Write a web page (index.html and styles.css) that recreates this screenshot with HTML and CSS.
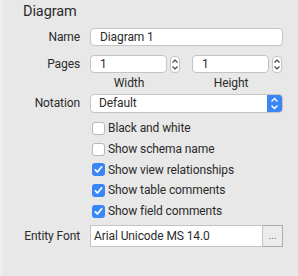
FILE: index.html
```html
<!DOCTYPE html>
<html lang="en">
<head>
  <meta charset="UTF-8" />
  <title>Diagram Inspector</title>
  <link rel="stylesheet" href="styles.css">
</head>
<body>
  <div class="panel">
    <h1>Diagram</h1>

    <div class="row row-name">
      <label class="label">Name</label>
      <div class="field"><input class="text-input" type="text" value="Diagram 1"></div>
    </div>

    <div class="row row-pages">
      <label class="label">Pages</label>
      <div class="field pages">
        <div class="page-box">
          <div class="page-inputs">
            <input class="text-input short" type="text" value="1">
            <span class="stepper">
              <svg width="10" height="17" viewBox="0 0 10 17"><path d="M2.5 6.5 5 4 7.5 6.5M2.5 10.5 5 13 7.5 10.5" fill="none" stroke="#444" stroke-width="1.2"/></svg>
            </span>
          </div>
          <span class="caption">Width</span>
        </div>
        <div class="page-box">
          <div class="page-inputs">
            <input class="text-input short" type="text" value="1">
            <span class="stepper">
              <svg width="10" height="17" viewBox="0 0 10 17"><path d="M2.5 6.5 5 4 7.5 6.5M2.5 10.5 5 13 7.5 10.5" fill="none" stroke="#444" stroke-width="1.2"/></svg>
            </span>
          </div>
          <span class="caption">Height</span>
        </div>
      </div>
    </div>

    <div class="row row-notation">
      <label class="label">Notation</label>
      <div class="field">
        <div class="select">
          <span class="select-value">Default</span>
          <span class="select-button">
            <svg width="15" height="17" viewBox="0 0 15 17"><path d="M4.5 6.5 7.5 3.5 10.5 6.5M4.5 10.5 7.5 13.5 10.5 10.5" fill="none" stroke="#fff" stroke-width="1.4"/></svg>
          </span>
        </div>
      </div>
    </div>

    <div class="checks">
      <div class="check"><span class="box"></span>Black and white</div>
      <div class="check"><span class="box"></span>Show schema name</div>
      <div class="check"><span class="box on"><svg width="13" height="13" viewBox="0 0 13 13"><path d="M3.3 6.8 5.4 9 9.7 3.8" fill="none" stroke="#fff" stroke-width="1.7" stroke-linecap="round" stroke-linejoin="round"/></svg></span>Show view relationships</div>
      <div class="check"><span class="box on"><svg width="13" height="13" viewBox="0 0 13 13"><path d="M3.3 6.8 5.4 9 9.7 3.8" fill="none" stroke="#fff" stroke-width="1.7" stroke-linecap="round" stroke-linejoin="round"/></svg></span>Show table comments</div>
      <div class="check"><span class="box on"><svg width="13" height="13" viewBox="0 0 13 13"><path d="M3.3 6.8 5.4 9 9.7 3.8" fill="none" stroke="#fff" stroke-width="1.7" stroke-linecap="round" stroke-linejoin="round"/></svg></span>Show field comments</div>
    </div>

    <div class="row row-font">
      <label class="label">Entity Font</label>
      <div class="field font-field">
        <input class="font-input" type="text" value="Arial Unicode MS 14.0">
        <button class="dots">...</button>
      </div>
    </div>
  </div>
</body>
</html>
```

FILE: styles.css
```css
body {
  margin: 0;
  background: #e8e8e8;
  font-family: Roboto, "Liberation Sans", sans-serif;
  font-size: 12px;
  letter-spacing: -0.1px;
  color: #2b2b2b;
}
.panel {
  padding: 2px 15px 0 0;
  border-left: 2px solid #efefef;
  height: 274px;
}
h1 {
  margin: 0 0 0 21px;
  font-size: 14.5px;
  font-weight: 400;
  line-height: 20px;
}
.row {
  display: grid;
  grid-template-columns: 78px minmax(0, 1fr);
  column-gap: 10px;
  align-items: start;
}
.label {
  text-align: right;
  line-height: 18px;
}
.row-name {
  margin-top: 6px;
}
.row-pages {
  margin-top: 9px;
}
.row-notation {
  margin-top: 4px;
}
.text-input {
  box-sizing: border-box;
  width: 100%;
  height: 18px;
  border: 1px solid #c4c4c4;
  border-radius: 4px;
  background: #fff;
  font: inherit;
  letter-spacing: inherit;
  color: inherit;
  padding: 0 9px;
  outline: none;
}
.pages {
  display: flex;
  gap: 12px;
}
.page-box {
  display: flex;
  flex-direction: column;
  align-items: center;
  width: 90px;
}
.page-inputs {
  display: flex;
  align-items: center;
  gap: 3px;
  width: 100%;
}
.text-input.short {
  width: 77px;
  flex: none;
}
.stepper {
  display: flex;
  width: 10px;
  height: 17px;
  box-sizing: border-box;
  border: 1px solid #c4c4c4;
  border-radius: 4px;
  background: #fff;
  align-items: center;
  justify-content: center;
}
.stepper svg {
  flex: none;
}
.caption {
  line-height: 14px;
  margin-top: 3px;
  padding-right: 12px;
}
.select {
  display: flex;
  height: 17px;
  border: 1px solid #c4c4c4;
  border-radius: 4px;
  background: #fff;
  overflow: hidden;
}
.select-value {
  flex: 1;
  padding-left: 8px;
  line-height: 17px;
}
.select-button {
  display: flex;
  width: 15px;
  background: #3b86f7;
}
.checks {
  margin: 5px 0 0 90px;
  display: flex;
  flex-direction: column;
}
.check {
  display: flex;
  align-items: center;
  height: 20.7px;
}
.box {
  box-sizing: border-box;
  width: 13px;
  height: 13px;
  border: 1px solid #b8b8b8;
  border-radius: 3px;
  background: #fff;
  margin-right: 3px;
  display: flex;
}
.box.on {
  border: none;
  background: #3b86f7;
}
.row-font {
  margin-top: 4px;
  align-items: center;
}
.font-field {
  display: flex;
  height: 22px;
}
.font-input {
  box-sizing: border-box;
  flex: 1;
  min-width: 0;
  height: 22px;
  border: 1px solid #c4c4c4;
  background: #fff;
  font: inherit;
  letter-spacing: inherit;
  color: inherit;
  padding: 0 3px;
  outline: none;
}
.dots {
  box-sizing: border-box;
  width: 20px;
  height: 22px;
  border: 1px solid #aaa;
  border-left: none;
  background: #ececec;
  font-size: 9px;
  color: #555;
  padding: 0;
  cursor: pointer;
}
```
